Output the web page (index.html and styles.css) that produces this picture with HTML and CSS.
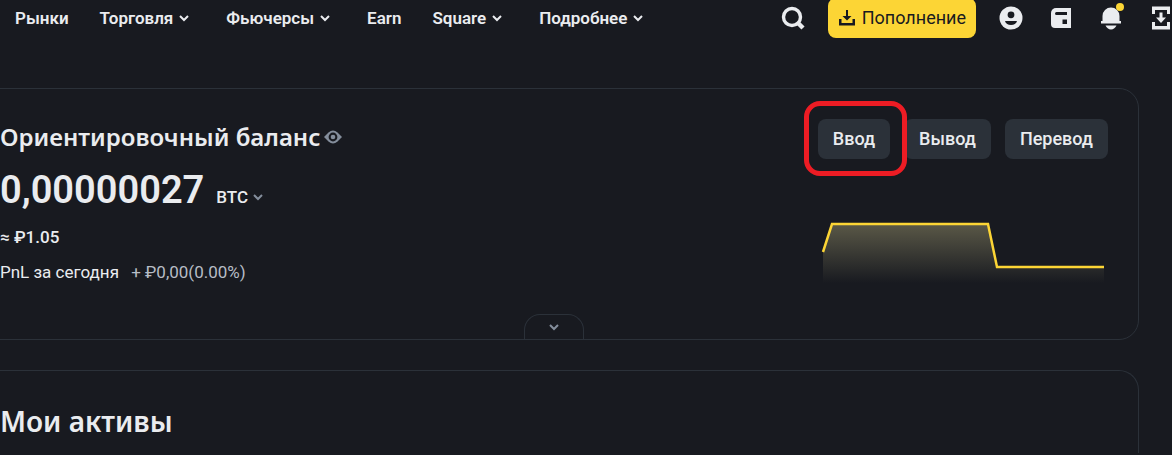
FILE: index.html
```html
<!DOCTYPE html>
<html lang="ru">

<head>
    <meta charset="UTF-8">
    <meta name="viewport" content="width=device-width, initial-scale=1.0">
    <title>Ориентировочный баланс</title>
    <link rel="stylesheet" href="styles.css">
</head>

<body>
    <header class="header">
        <nav class="nav">
            <a href="#">Рынки</a>
            <a href="#">Торговля <svg class="chevron" viewBox="0 0 10 8"><path d="M1 2l4 4 4-4"/></svg></a>
            <a href="#">Фьючерсы <svg class="chevron" viewBox="0 0 10 8"><path d="M1 2l4 4 4-4"/></svg></a>
            <a href="#">Earn</a>
            <a href="#">Square <svg class="chevron" viewBox="0 0 10 8"><path d="M1 2l4 4 4-4"/></svg></a>
            <a href="#">Подробнее <svg class="chevron" viewBox="0 0 10 8"><path d="M1 2l4 4 4-4"/></svg></a>
        </nav>

        <div class="tools">
            <button class="icon-btn" aria-label="Поиск">
                <svg width="24" height="24" viewBox="0 0 24 24" fill="none" stroke="#eaecef" stroke-width="3.400"><circle cx="11" cy="11" r="8.500"/><path d="M16.500 16.500l5.500 5.500" stroke-width="4.400"/></svg>
            </button>
            <button class="deposit">
                <svg width="16" height="16" viewBox="0 0 16 16" fill="#181a20"><path d="M7 0h2v6h3.500L8 10.500 3.500 6H7zM0 9h2.500v4h11V9H16v6.500H0z"/></svg>
                Пополнение
            </button>
            <button class="icon-btn" aria-label="Профиль">
                <svg width="24" height="24" viewBox="0 0 24 24"><circle cx="12" cy="12" r="11.500" fill="#eaecef"/><circle cx="12" cy="8.800" r="3.400" fill="#181a20"/><path d="M6 15h12c-.6 2.600-3 4-6 4s-5.400-1.400-6-4z" fill="#181a20"/></svg>
            </button>
            <button class="icon-btn" aria-label="Кошелёк">
                <svg width="24" height="24" viewBox="0 0 24 24"><path d="M7 2h15v20H6a4 4 0 0 1-4-4V7a5 5 0 0 1 5-5z" fill="#eaecef"/><path d="M7.500 6H18v3H7.500a1.500 1.500 0 0 1 0-3zM13.500 13.500H18V18h-4.500z" fill="#181a20"/></svg>
            </button>
            <button class="icon-btn" aria-label="Уведомления">
                <svg width="24" height="24" viewBox="0 0 24 24" fill="#eaecef"><path d="M3.500 10a8.500 8.500 0 0 1 17 0v5H22v2.500H2V15h1.500zM6.500 19.500h11c-1 2-3 4-5.500 4s-4.500-2-5.500-4z"/></svg>
                <span class="dot"></span>
            </button>
            <button class="icon-btn" aria-label="Загрузить приложение">
                <svg width="24" height="24" viewBox="0 0 24 24" fill="#eaecef"><path d="M3 .5h18V8h-3V4H6v4H3zM3 16h3v4h12v-4h3v7.500H3zM10.500 6.500h3v5H17l-5 5.500-5-5.500h3.500z"/></svg>
            </button>
        </div>
    </header>

    <main>
        <section class="card balance">
            <div class="summary">
                <h2>Ориентировочный баланс
                    <svg width="20" height="16" viewBox="0 0 20 16"><path d="M1 8l4.500-4.500Q10-.5 14.500 3.500L19 8l-4.500 4.500q-4.500 4-9 0z" fill="#848e9c"/><circle cx="10" cy="8" r="4.400" fill="#181a20"/><circle cx="10" cy="8" r="2.300" fill="#848e9c"/></svg>
                </h2>
                <div class="amount">
                    <strong>0,00000027</strong>
                    <button class="currency">BTC <svg class="chevron muted" viewBox="0 0 10 8"><path d="M1 2l4 4 4-4"/></svg></button>
                </div>
                <p class="fiat">≈ ₽1.05</p>
                <p class="pnl">PnL за сегодня <span>+ ₽0,00(0.00%)</span></p>
            </div>

            <div class="side">
                <div class="actions">
                    <div class="marked"><button>Ввод</button></div>
                    <button>Вывод</button>
                    <button>Перевод</button>
                </div>
                <svg class="chart" viewBox="0 0 290 64">
                    <defs>
                        <linearGradient id="fade" x1="0" y1="0" x2="0" y2="1">
                            <stop offset="0" stop-color="#5a5847"/>
                            <stop offset="1" stop-color="#181a20"/>
                        </linearGradient>
                    </defs>
                    <path d="M5 32L14 4H170L179 47H286V63H5z" fill="url(#fade)"/>
                    <path d="M5 32L14 4H170L179 47H286" fill="none" stroke="#fcd535" stroke-width="2.500"/>
                </svg>
            </div>

            <button class="expand" aria-label="Развернуть"><svg class="chevron muted" viewBox="0 0 10 8"><path d="M1 2l4 4 4-4"/></svg></button>
        </section>

        <section class="card assets">
            <h1>Мои активы</h1>
        </section>
    </main>
</body>

</html>
```
FILE: styles.css
```css
* {
    box-sizing: border-box;
}

body {
    margin: 0;
    background-color: #181a20;
    color: #eaecef;
    font-family: Roboto, "Liberation Sans", sans-serif;
    font-size: 17px;
    line-height: 24px;
    overflow-x: hidden;
}

h1,
h2,
p {
    margin: 0;
}

h1,
h2 {
    font-family: "Noto Sans", sans-serif;
    font-weight: 600;
}

button {
    border: none;
    padding: 0;
    background: none;
    color: inherit;
    font: inherit;
    cursor: pointer;
}

svg {
    display: block;
    flex-shrink: 0;
}

.header {
    display: flex;
    align-items: center;
    justify-content: space-between;
    height: 36px;
    padding-left: 15px;
}

.nav {
    display: flex;
    gap: 31px;
    font-weight: 600;
}

.nav a {
    display: flex;
    align-items: center;
    gap: 6px;
    color: inherit;
    text-decoration: none;
}

.nav .chevron {
    margin-right: 6px;
}

.chevron {
    width: 10px;
    height: 8px;
    fill: none;
    stroke: #eaecef;
    stroke-width: 2;
}

.muted {
    stroke: #848e9c;
}

.tools {
    display: flex;
    align-items: center;
    gap: 26px;
    margin-right: -1px;
}

.icon-btn {
    position: relative;
}

.dot {
    position: absolute;
    top: -3px;
    right: -1px;
    width: 8px;
    height: 8px;
    border-radius: 50%;
    background-color: #fcd535;
}

.deposit {
    display: flex;
    align-items: center;
    gap: 7px;
    height: 40px;
    padding: 0 10px 0 11px;
    margin: 0 -3px;
    border-radius: 8px;
    background-color: #fcd535;
    color: #181a20;
    font-size: 18px;
}

/* cards run off the left edge of the window */
.card {
    position: relative;
    margin: 0 33px 30px -31px;
    padding: 30px;
    border: 1px solid #2b3139;
    border-radius: 20px;
}

.balance {
    display: flex;
    justify-content: space-between;
    margin-top: 52px;
    padding-bottom: 55px;
}

.balance h2 {
    display: flex;
    align-items: center;
    gap: 2px;
    font-size: 24px;
    line-height: 36px;
}

.amount {
    display: flex;
    align-items: baseline;
    gap: 12px;
    margin-top: 10px;
    line-height: 50px;
}

.amount strong {
    font-size: 38px;
    font-weight: 600;
}

.currency {
    display: flex;
    align-items: center;
    gap: 5px;
    font-weight: 500;
}

.fiat {
    margin-top: 3px;
    font-weight: 500;
}

.pnl {
    margin-top: 11px;
}

.pnl span {
    margin-left: 8px;
    color: #b7bdc6;
}

.actions {
    display: flex;
    gap: 14px;
}

.actions button {
    height: 40px;
    padding: 0 15px;
    border-radius: 8px;
    background-color: #2b3139;
    font-size: 18px;
    font-weight: 500;
}

.marked {
    position: relative;
}

.marked::after {
    content: "";
    position: absolute;
    z-index: 1;
    inset: -18px -17px -17px -14px;
    border: 5px solid #ed1c24;
    border-radius: 16px;
    pointer-events: none;
}

.chart {
    width: 290px;
    height: 64px;
    margin: 61px 0 0 auto;
}

.expand {
    position: absolute;
    bottom: 0;
    left: 50%;
    display: flex;
    justify-content: center;
    width: 60px;
    height: 25px;
    margin-left: -30px;
    padding-top: 8px;
    border: 1px solid #2b3139;
    border-bottom: none;
    border-radius: 16px 16px 0 0;
}

.assets {
    margin-bottom: 0;
    padding-bottom: 12px;
    border-bottom: none;
    border-radius: 20px 20px 0 0;
}

h1 {
    font-size: 28px;
    line-height: 40px;
}
```
